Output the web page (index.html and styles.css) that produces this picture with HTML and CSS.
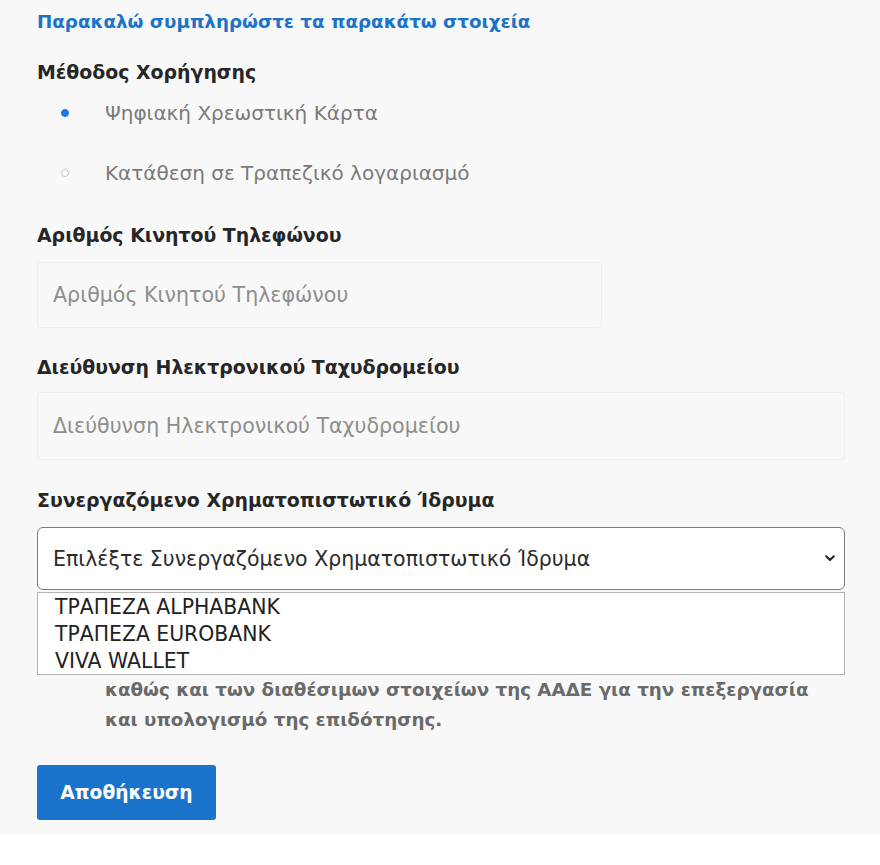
FILE: index.html
```html
<!DOCTYPE html>
<html lang="el">
<head>
<meta charset="utf-8">
<title>Φόρμα</title>
<link rel="stylesheet" href="styles.css">
</head>
<body>
<main class="page">
  <h2 class="title">Παρακαλώ συμπληρώστε τα παρακάτω στοιχεία</h2>

  <section class="group">
    <div class="label label-method">Μέθοδος Χορήγησης</div>
    <label class="radio"><span class="dot dot-on"></span><span class="radio-text">Ψηφιακή Χρεωστική Κάρτα</span></label>
    <label class="radio"><span class="dot"></span><span class="radio-text">Κατάθεση σε Τραπεζικό λογαριασμό</span></label>
  </section>

  <section class="group group-phone">
    <div class="label">Αριθμός Κινητού Τηλεφώνου</div>
    <div class="input input-short"><span class="placeholder">Αριθμός Κινητού Τηλεφώνου</span></div>
  </section>

  <section class="group group-mail">
    <div class="label">Διεύθυνση Ηλεκτρονικού Ταχυδρομείου</div>
    <div class="input input-long"><span class="placeholder">Διεύθυνση Ηλεκτρονικού Ταχυδρομείου</span></div>
  </section>

  <section class="group group-bank">
    <div class="label">Συνεργαζόμενο Χρηματοπιστωτικό Ίδρυμα</div>
    <div class="select-wrap">
      <div class="select">
        <span class="select-text">Επιλέξτε Συνεργαζόμενο Χρηματοπιστωτικό Ίδρυμα</span>
        <svg class="chevron" width="10" height="7" viewBox="0 0 10 7"><path d="M1.2 1.3 L5 5 L8.8 1.3" fill="none" stroke="#222" stroke-width="2" stroke-linecap="round" stroke-linejoin="round"/></svg>
      </div>
      <ul class="options">
        <li>ΤΡΑΠΕΖΑ ALPHABANK</li>
        <li>ΤΡΑΠΕΖΑ EUROBANK</li>
        <li>VIVA WALLET</li>
      </ul>
    </div>
    <p class="consent">καθώς και των διαθέσιμων στοιχείων της ΑΑΔΕ για την επεξεργασία<br>και υπολογισμό της επιδότησης.</p>
  </section>

  <button class="btn" type="button">Αποθήκευση</button>
</main>
</body>
</html>
```

FILE: styles.css
```css
html, body {
  margin: 0;
  padding: 0;
  background: #ffffff;
}

.page {
  background: #f8f8f8;
  padding: 10px 0 15px 37px;
  font-family: "DejaVu Sans", Roboto, sans-serif;
  box-sizing: border-box;
  height: 835px;
}

.title {
  margin: 0;
  font-size: 18.3px;
  line-height: 24px;
  font-weight: 700;
  color: #1b74c8;
}

.label {
  font-size: 18.9px;
  line-height: 26px;
  font-weight: 700;
  color: #262626;
}

.label-method {
  margin-top: 27px;
  line-height: 22px;
}

.radio {
  display: flex;
  align-items: center;
  height: 60px;
}

.dot {
  width: 8px;
  height: 8px;
  border-radius: 50%;
  border: 1px solid #c4c4c4;
  background: #fff;
  box-sizing: border-box;
  margin-left: 24px;
  margin-right: 36px;
}

.dot-on {
  background: #1a73e8;
  border-color: #1a73e8;
}

.radio-text {
  font-size: 20px;
  color: #7a7a7a;
}

.group-phone {
  margin-top: 19px;
}

.input {
  margin-top: 14px;
  height: 66px;
  border: 1px solid #efefef;
  border-radius: 3px;
  background: #f8f8f8;
  box-sizing: border-box;
  display: flex;
  align-items: center;
  padding-left: 15px;
}

.input-short {
  width: 565px;
}

.input-long {
  width: 808px;
  height: 68px;
  margin-top: 12px;
}

.placeholder {
  font-size: 20.6px;
  color: #8e8e8e;
}

.group-mail {
  margin-top: 26px;
}

.group-bank {
  margin-top: 27px;
}

.select-wrap {
  position: relative;
  width: 808px;
  margin-top: 14px;
}

.select {
  height: 63px;
  border: 1.5px solid #7d7d7d;
  border-radius: 6px;
  background: #ffffff;
  box-sizing: border-box;
  display: flex;
  align-items: center;
  justify-content: space-between;
  padding: 0 9px 0 15px;
}

.select-text {
  font-size: 20.5px;
  color: #2b2b2b;
}

.options {
  position: absolute;
  left: 0;
  top: 65px;
  width: 808px;
  height: 83px;
  margin: 0;
  padding: 1px 0 0 17px;
  list-style: none;
  background: #ffffff;
  border: 1.5px solid #b3b3b3;
  box-sizing: border-box;
}

.options li {
  font-size: 20.4px;
  line-height: 27px;
  color: #222222;
}

.consent {
  margin: 85px 0 0 68px;
  font-size: 18.3px;
  line-height: 30px;
  font-weight: 700;
  color: #6a6a6a;
}

.btn {
  margin-top: 30px;
  width: 179px;
  height: 55px;
  border: none;
  border-radius: 3px;
  background: #1b74cc;
  color: #ffffff;
  font-family: "DejaVu Sans", Roboto, sans-serif;
  font-size: 18.7px;
  font-weight: 700;
  cursor: pointer;
}
```
